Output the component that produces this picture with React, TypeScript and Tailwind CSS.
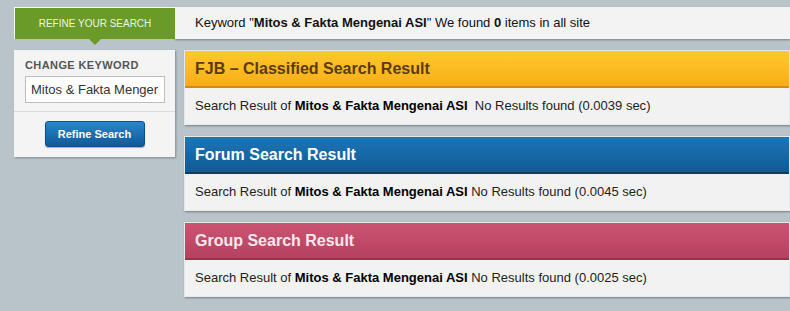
import React from "react";

const KW = "Mitos & Fakta Mengenai ASI";

function Panel({
  title,
  headerClass,
  titleClass,
  time,
  doubleSpace,
}: {
  title: string;
  headerClass: string;
  titleClass: string;
  time: string;
  doubleSpace?: boolean;
}) {
  return (
    <div className="h-[75px] flex flex-col bg-[#f2f2f2] shadow-[1px_1px_2px_rgba(0,0,0,0.35)] border border-[#e6e9ec]">
      <div className={`h-[37px] flex items-center px-[10px] ${headerClass}`}>
        <span className={`text-[16px] font-bold ${titleClass}`}>{title}</span>
      </div>
      <div className="flex-1 flex items-center px-[10px] text-[13px] text-[#222]">
        <span className="whitespace-pre">
          Search Result of <b className="text-black">{KW}</b>
          {doubleSpace ? "  " : " "}No Results found ({time})
        </span>
      </div>
    </div>
  );
}

export default function App() {
  return (
    <div
      className="w-[790px] h-[311px] overflow-hidden bg-[#b8c3ca] pt-[7px] pl-[14px]"
      style={{ fontFamily: '"Liberation Sans", Arial, sans-serif' }}
    >
      <div className="flex h-[32px]">
        <div className="relative w-[161px] bg-[#6a9a28] border-t border-l border-[#f5f7f0] flex items-center justify-center">
          <span className="text-[10px] text-[#eef5e2]">REFINE YOUR SEARCH</span>
          <div className="absolute left-1/2 -translate-x-1/2 top-full w-0 h-0 border-l-[6px] border-r-[6px] border-t-[6px] border-l-transparent border-r-transparent border-t-[#6a9a28]" />
        </div>
        <div className="flex-1 bg-[#f3f3f4] flex items-center pl-[20px] text-[13px] text-[#111] shadow-[0_1px_2px_rgba(0,0,0,0.35)]">
          <span>
            Keyword "<b>{KW}</b>" We found <b>0</b> items in all site
          </span>
        </div>
      </div>

      <div className="flex mt-[11px]">
        <div className="w-[161px] h-[107px] shrink-0 bg-[#f4f4f4] shadow-[1px_1px_2px_rgba(0,0,0,0.3)] flex flex-col">
          <div className="px-[11px] pt-[9px] pb-[8px] border-b border-[#dcdcdc]">
            <div className="text-[11px] font-bold text-[#555] tracking-[0.4px] leading-[13px]">CHANGE KEYWORD</div>
            <div className="mt-[4px] w-[140px] h-[27px] bg-white border border-[#bdbdbd] flex items-center pl-[5px] overflow-hidden">
              <span className="text-[13px] text-[#333] whitespace-nowrap">Mitos &amp; Fakta Menger</span>
            </div>
          </div>
          <div className="flex justify-center pt-[9px]">
            <div className="w-[100px] h-[26px] rounded-[3px] bg-gradient-to-b from-[#2a86cc] to-[#0e5a98] border border-[#0c4f86] flex items-center justify-center shadow-[0_1px_1px_rgba(0,0,0,0.3)]">
              <span className="text-[11px] font-bold text-white">Refine Search</span>
            </div>
          </div>
        </div>

        <div className="flex-1 ml-[9px] flex flex-col gap-[11px]">
          <Panel
            title="FJB – Classified Search Result"
            headerClass="bg-gradient-to-b from-[#ffc92c] to-[#f9ad16] border-b-[2px] border-[#d5891d]"
            titleClass="text-[#5b3b0c]"
            time="0.0039 sec"
            doubleSpace
          />
          <Panel
            title="Forum Search Result"
            headerClass="bg-gradient-to-b from-[#1d75b6] to-[#0f5b97] border-b-[2px] border-[#0b3d66]"
            titleClass="text-white"
            time="0.0045 sec"
          />
          <Panel
            title="Group Search Result"
            headerClass="bg-gradient-to-b from-[#cb5473] to-[#b6405f] border-b-[2px] border-[#9a3049]"
            titleClass="text-[#fbe8ee]"
            time="0.0025 sec"
          />
        </div>
      </div>
    </div>
  );
}
